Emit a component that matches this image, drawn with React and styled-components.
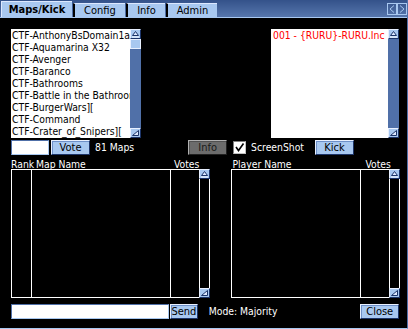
import React from 'react'
import styled, {createGlobalStyle} from 'styled-components'

const LIGHT = '#a8c8f0'
const MID = '#5070a8'
const DARK = '#1c3468'

const Global = createGlobalStyle`
  * { box-sizing: border-box; }
  body {
    margin: 0;
    background: #000;
    font-family: "DejaVu Sans Condensed", "DejaVu Sans", sans-serif;
    font-stretch: condensed;
    font-size: 10.3px;
  }
`

const Window = styled.div`
  width: 408px;
  height: 329px;
  background: #000;
  display: flex;
  flex-direction: column;
  border-bottom: 1px solid ${LIGHT};
  border-right: 1px solid ${MID};
  color: #fff;
`

const TabBar = styled.div`
  height: 18px;
  flex: none;
  display: flex;
  align-items: flex-end;
  padding-left: 1px;
  background: linear-gradient(#34528a, #5676ac);
  border-bottom: 1px solid ${LIGHT};
`

const Tab = styled.div`
  height: ${p => (p.$active ? 16 : 14)}px;
  width: ${p => p.$w}px;
  margin-right: 1px;
  background: ${LIGHT};
  color: #000;
  font-weight: ${p => (p.$active ? 700 : 400)};
  border-left: ${p => (p.$active ? '1px solid #dce8ff' : '2px solid #000')};
  border-top: 1px solid #dce8ff;
  display: flex;
  align-items: center;
  justify-content: center;
  line-height: 1;
  font-size: 11px;
  padding-bottom: 1px;
`

const TabSpacer = styled.div`
  flex: 1;
`

const TabArrow = styled.div`
  width: 10px;
  height: 12px;
  margin-bottom: 2px;
  border: 1px solid ${LIGHT};
  display: flex;
  align-items: center;
  justify-content: center;
`

const Body = styled.div`
  flex: 1;
  padding: 11px 8px 0 11px;
  display: flex;
  flex-direction: column;
`

const Row = styled.div`
  display: flex;
  align-items: ${p => p.$align || 'stretch'};
  height: ${p => p.$h}px;
  margin-top: ${p => p.$mt || 0}px;
  flex: none;
`

const ListWrap = styled.div`
  display: flex;
  width: ${p => p.$w}px;
  margin-left: ${p => p.$ml || 0}px;
`

const ListBox = styled.div`
  flex: 1;
  background: #fff;
  overflow: hidden;
  padding-left: ${p => p.$pl || 1}px;
  color: ${p => p.$color || '#000'};
`

const ListItem = styled.div`
  height: 12px;
  line-height: 12px;
  white-space: nowrap;
`

const Scroll = styled.div`
  width: 11px;
  flex: none;
  display: flex;
  flex-direction: column;
  background: ${p => (p.$open ? 'transparent' : MID)};
`

const Track = styled.div`
  flex: 1;
  ${p => p.$open && `
    border-left: 1px solid #fff;
    border-right: 1px solid #fff;
  `}
`

const Thumb = styled.div`
  height: 10px;
  background: ${LIGHT};
  border: 1px solid #e8f0ff;
`

const ArrowBtn = styled.div`
  height: 10px;
  flex: none;
  background: ${LIGHT};
  border: 1px solid;
  border-color: #e8f0ff ${DARK} ${DARK} #e8f0ff;
  display: flex;
  align-items: center;
  justify-content: center;
`

const Input = styled.div`
  width: ${p => p.$w}px;
  height: 15px;
  background: #fff;
  border: 1px solid;
  border-color: ${MID} ${LIGHT} ${LIGHT} ${MID};
  margin-left: ${p => p.$ml || 0}px;
`

const Button = styled.div`
  width: ${p => p.$w}px;
  height: 15px;
  margin-left: ${p => p.$ml || 0}px;
  background: ${p => (p.$gray ? '#6c6c6c' : LIGHT)};
  color: ${p => (p.$gray ? '#1a1a1a' : '#000')};
  border: 1px solid;
  border-color: ${p => (p.$gray ? '#b0b0b0 #202020 #202020 #b0b0b0' : `#e8f0ff ${DARK} ${DARK} #e8f0ff`)};
  box-shadow: inset 1px 1px 0 ${p => (p.$gray ? '#505050' : '#6e90c8')};
  display: flex;
  align-items: center;
  justify-content: center;
  line-height: 1;
  font-size: 11px;
`

const Label = styled.span`
  margin-left: ${p => p.$ml || 0}px;
  color: #fff;
  white-space: nowrap;
`

const Check = styled.div`
  width: 13px;
  height: 13px;
  margin-left: ${p => p.$ml}px;
  background: #fff;
  border: 1px solid;
  border-color: #808080 #c0c0c0 #c0c0c0 #808080;
  display: flex;
  align-items: center;
  justify-content: center;
`

const HeadGroup = styled.div`
  position: relative;
  width: ${p => p.$w}px;
  margin-left: ${p => p.$ml || 0}px;
  height: 10px;
  line-height: 10px;
`

const Head = styled.span`
  position: absolute;
  left: ${p => p.$x}px;
  top: 0;
  white-space: nowrap;
`

const TableWrap = styled.div`
  display: flex;
  margin-left: ${p => p.$ml || 0}px;
`

const Table = styled.div`
  width: ${p => p.$w}px;
  display: grid;
  grid-template-columns: ${p => p.$cols};
  border: 1px solid #fff;
  border-right: none;
`

const Col = styled.div`
  border-right: ${p => (p.$last ? 'none' : '1px solid #fff')};
`

const UpIcon = () => (
  <svg width="9" height="8" viewBox="0 0 9 8">
    <polygon points="1.5,5.5 4.5,1.5 7.5,5.5" fill="#dce8ff" stroke="#1c3468" strokeWidth="1" />
    <line x1="1" y1="7" x2="8" y2="7" stroke="#fff" />
  </svg>
)

const DownIcon = () => (
  <svg width="9" height="8" viewBox="0 0 9 8">
    <polygon points="1.5,6.5 7.5,1.5 7.5,6.5" fill="#dce8ff" stroke="#1c3468" strokeWidth="1" />
  </svg>
)

const Scrollbar = ({open, thumb}) => (
  <Scroll $open={open}>
    <ArrowBtn><UpIcon /></ArrowBtn>
    <Track $open={open}>{thumb && <Thumb />}</Track>
    <ArrowBtn><DownIcon /></ArrowBtn>
  </Scroll>
)

const maps = [
  'CTF-AnthonyBsDomain1a',
  'CTF-Aquamarina X32',
  'CTF-Avenger',
  'CTF-Baranco',
  'CTF-Bathrooms',
  'CTF-Battle in the Bathroom',
  'CTF-BurgerWars][',
  'CTF-Command',
  'CTF-Crater_of_Snipers]['
]

export default function App () {
  return <>
    <Global />
    <Window>
      <TabBar>
        <Tab $active $w={71}>Maps/Kick</Tab>
        <Tab $w={52}>Config</Tab>
        <Tab $w={39}>Info</Tab>
        <Tab $w={51}>Admin</Tab>
        <TabSpacer />
        <TabArrow>
          <svg width="6" height="8" viewBox="0 0 6 8"><polyline points="5,0.5 1,4 5,7.5" fill="none" stroke={LIGHT} /></svg>
        </TabArrow>
        <TabArrow>
          <svg width="6" height="8" viewBox="0 0 6 8"><polyline points="1,0.5 5,4 1,7.5" fill="none" stroke={LIGHT} /></svg>
        </TabArrow>
      </TabBar>
      <Body>
        <Row $h={109}>
          <ListWrap $w={130}>
            <ListBox>
              {maps.map(m => <ListItem key={m}>{m}</ListItem>)}
            </ListBox>
            <Scrollbar thumb />
          </ListWrap>
          <ListWrap $w={129} $ml={130}>
            <ListBox $color="#ff0000" $pl={2}>
              <ListItem>001 - {'{RURU}'}-RURU.Inc</ListItem>
            </ListBox>
            <Scrollbar />
          </ListWrap>
        </Row>
        <Row $h={16} $mt={1} $align="center">
          <Input $w={38} />
          <Button $w={39} $ml={2}>Vote</Button>
          <Label $ml={5}>81 Maps</Label>
          <Button $gray $w={39} $ml={54}>Info</Button>
          <Check $ml={6}>
            <svg width="11" height="11" viewBox="0 0 11 11"><polyline points="2,5 4.5,8.5 9.5,1.5" fill="none" stroke="#000" strokeWidth="1.6" /></svg>
          </Check>
          <Label $ml={5}>ScreenShot</Label>
          <Button $w={39} $ml={11}>Kick</Button>
        </Row>
        <Row $h={10} $mt={4}>
          <HeadGroup $w={199}>
            <Head $x={0}>Rank</Head>
            <Head $x={25}>Map Name</Head>
            <Head $x={163}>Votes</Head>
          </HeadGroup>
          <HeadGroup $w={169} $ml={21}>
            <Head $x={2}>Player Name</Head>
            <Head $x={135}>Votes</Head>
          </HeadGroup>
        </Row>
        <Row $h={129}>
          <TableWrap>
            <Table $w={188} $cols="20px 1fr 28px">
              <Col /><Col /><Col $last />
            </Table>
            <Scrollbar open />
          </TableWrap>
          <TableWrap $ml={21}>
            <Table $w={158} $cols="1fr 28px">
              <Col /><Col $last />
            </Table>
            <Scrollbar open />
          </TableWrap>
        </Row>
        <Row $h={16} $mt={5} $align="center">
          <Input $w={160} />
          <Button $w={28} $ml={1}>Send</Button>
          <Label $ml={11}>Mode: Majority</Label>
          <Button $w={39} $ml={83}>Close</Button>
        </Row>
      </Body>
    </Window>
  </>
}
